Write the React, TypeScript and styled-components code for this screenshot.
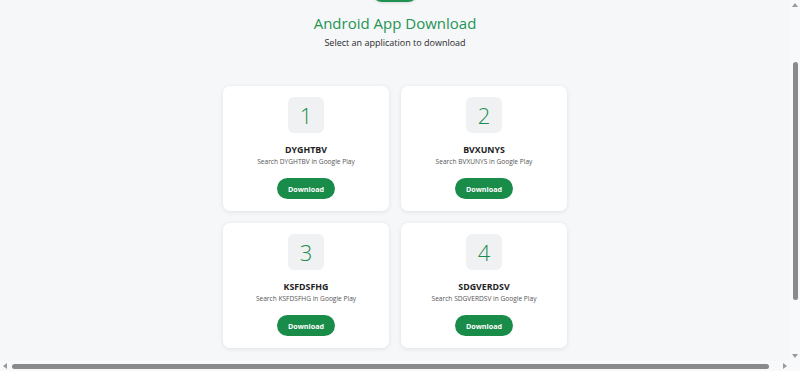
import React, { useEffect, useRef } from "react";
import styled, { createGlobalStyle } from "styled-components";

const GlobalStyle = createGlobalStyle`
  html, body {
    margin: 0;
    padding: 0;
    background: #f6f7f9;
    overflow: hidden;
  }
  body {
    font-family: "Open Sans", "Noto Sans", Arial, sans-serif;
  }
`;

const apps = [
  { id: 1, name: "DYGHTBV" },
  { id: 2, name: "BVXUNYS" },
  { id: 3, name: "KSFDSFHG" },
  { id: 4, name: "SDGVERDSV" },
];

const Frame = styled.div`
  width: 100vw;
  height: 100vh;
  display: grid;
  grid-template-columns: 1fr 10px;
  grid-template-rows: 1fr 10px;
  background: #f6f7f9;
`;

const Viewport = styled.div`
  overflow: hidden;
  min-width: 0;
  min-height: 0;
`;

// fake window scrollbars, the screenshot shows them
const VBar = styled.div`
  display: flex;
  flex-direction: column;
  align-items: center;
  background: #f8f9fa;
`;

const HBar = styled.div`
  display: flex;
  flex-direction: row;
  align-items: center;
  background: #f8f9fa;
`;

const Corner = styled.div`
  background: #f8f9fa;
`;

const Arrow = styled.div`
  flex: 0 0 10px;
  width: 10px;
  height: 10px;
  display: flex;
  align-items: center;
  justify-content: center;
`;

const Track = styled.div<{ $vertical?: boolean }>`
  flex: 1;
  display: flex;
  flex-direction: ${(p) => (p.$vertical ? "column" : "row")};
  align-items: center;
  align-self: stretch;
`;

const Thumb = styled.div<{ $vertical?: boolean; $start: number; $size: number }>`
  background: #8a8a8a;
  border-radius: 3px;
  ${(p) =>
    p.$vertical
      ? `width: 5px; height: ${p.$size}px; margin-top: ${p.$start}px;`
      : `height: 5px; width: ${p.$size}px; margin-left: ${p.$start}px;`}
`;

const Tri = ({ dir }: { dir: "up" | "down" | "left" | "right" }) => {
  const pts = {
    up: "0,5 3,1 6,5",
    down: "0,1 6,1 3,5",
    left: "5,0 5,6 1,3",
    right: "1,0 1,6 5,3",
  }[dir];
  return (
    <svg width="6" height="6" viewBox="0 0 6 6">
      <polygon points={pts} fill="#9a9a9a" />
    </svg>
  );
};

const Page = styled.div`
  width: 800px;
  padding: 40px 0 71px;
  display: flex;
  flex-direction: column;
  align-items: center;
  box-sizing: border-box;
`;

const Logo = styled.div`
  width: 46px;
  height: 46px;
  border-radius: 10px;
  background: #1e9150;
  box-shadow: 0 1px 3px rgba(0, 0, 0, 0.12);
`;

const Title = styled.h1`
  margin: 9px 0 0;
  font-size: 15px;
  line-height: 24px;
  font-weight: 500;
  color: #1f9455;
`;

const Subtitle = styled.p`
  margin: 1px 0 0;
  font-size: 9px;
  line-height: 14px;
  color: #2a2a2a;
`;

const Grid = styled.div`
  margin-top: 36px;
  display: grid;
  grid-template-columns: repeat(2, 166px);
  gap: 12px;
`;

const Card = styled.div`
  background: #fff;
  border-radius: 7px;
  box-shadow: 0 1px 5px rgba(0, 0, 0, 0.09);
  height: 125px;
  box-sizing: border-box;
  padding: 11px 0 0;
  display: flex;
  flex-direction: column;
  align-items: center;
`;

const NumberBox = styled.div`
  width: 36px;
  height: 36px;
  border-radius: 6px;
  background: #f0f1f2;
  display: flex;
  align-items: center;
  justify-content: center;
  font-size: 22px;
  font-weight: 300;
  color: #1b8c4d;
`;

const Name = styled.div`
  margin-top: 10px;
  font-size: 8.8px;
  line-height: 14px;
  font-weight: 700;
  color: #222;
`;

const Hint = styled.div`
  font-size: 6.6px;
  line-height: 10px;
  color: #555;
`;

const DownloadButton = styled.button`
  margin-top: 11px;
  width: 58px;
  height: 21px;
  padding: 0;
  border: none;
  border-radius: 11px;
  background: #1a8c4a;
  color: #fff;
  font-family: inherit;
  font-size: 7.2px;
  font-weight: 700;
  cursor: pointer;
`;

const App = () => {
  const scroller = useRef<HTMLDivElement>(null);

  useEffect(() => {
    if (scroller.current) {
      scroller.current.scrollTop = 84;
      scroller.current.scrollLeft = 5;
    }
  }, []);

  return (
    <Frame>
      <GlobalStyle />
      <Viewport ref={scroller}>
        <Page>
          <Logo />
          <Title>Android App Download</Title>
          <Subtitle>Select an application to download</Subtitle>
          <Grid>
            {apps.map((app) => (
              <Card key={app.id}>
                <NumberBox>{app.id}</NumberBox>
                <Name>{app.name}</Name>
                <Hint>Search {app.name} in Google Play</Hint>
                <DownloadButton>Download</DownloadButton>
              </Card>
            ))}
          </Grid>
        </Page>
      </Viewport>
      <VBar>
        <Arrow>
          <Tri dir="up" />
        </Arrow>
        <Track $vertical>
          <Thumb $vertical $start={52} $size={238} />
        </Track>
        <Arrow>
          <Tri dir="down" />
        </Arrow>
      </VBar>
      <HBar>
        <Arrow>
          <Tri dir="left" />
        </Arrow>
        <Track>
          <Thumb $start={2} $size={757} />
        </Track>
        <Arrow>
          <Tri dir="right" />
        </Arrow>
      </HBar>
      <Corner />
    </Frame>
  );
};

export default App;
